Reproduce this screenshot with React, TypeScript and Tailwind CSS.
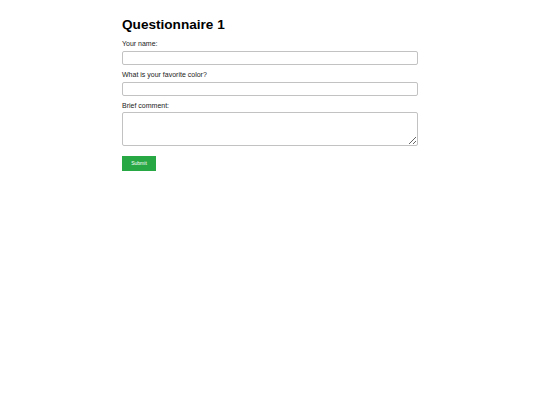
export default function App() {
  return (
    <div className="min-h-screen bg-white font-['Liberation_Sans',Arial,sans-serif] text-black">
      <div className="mx-auto w-[296px] pt-[17px]">
        <h1 className="text-[13.6px] leading-[16px] font-bold">Questionnaire 1</h1>

        <form className="mt-[7px] flex flex-col" onSubmit={(e) => e.preventDefault()}>
          <label className="block text-[7px] leading-[8px] text-[#222]">Your name:</label>
          <input
            type="text"
            className="mt-[3px] block h-[14px] w-full rounded-[2px] border border-[#c2c2c2] bg-white"
          />

          <label className="mt-[6px] block text-[7px] leading-[8px] text-[#222]">What is your favorite color?</label>
          <input
            type="text"
            className="mt-[3px] block h-[14px] w-full rounded-[2px] border border-[#c2c2c2] bg-white"
          />

          <label className="mt-[6px] block text-[7px] leading-[8px] text-[#222]">Brief comment:</label>
          <textarea className="mt-[2px] block h-[34px] w-full rounded-[2px] border border-[#c2c2c2] bg-white" />

          <button
            type="submit"
            className="mt-[10px] block h-[15px] w-[34px] bg-[#28a745] text-[5px] leading-[15px] text-white"
          >
            Submit
          </button>
        </form>
      </div>
    </div>
  );
}
